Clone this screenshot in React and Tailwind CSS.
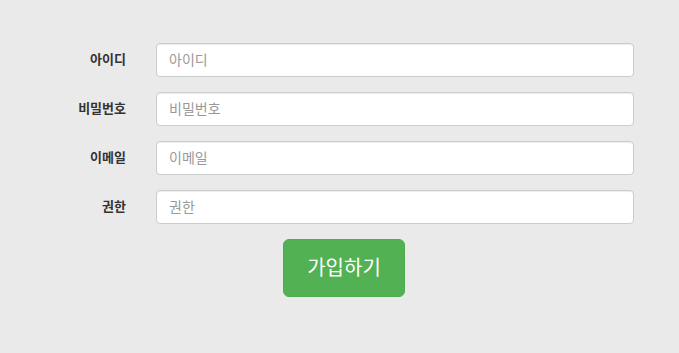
const fields = [
  { label: "아이디", name: "id" },
  { label: "비밀번호", name: "password" },
  { label: "이메일", name: "email" },
  { label: "권한", name: "role" },
];

export default function App() {
  return (
    <div
      className="min-h-[353px] w-full bg-[#eaeaea] pt-[43px]"
      style={{ fontFamily: '"Noto Sans CJK KR", "Noto Sans", sans-serif' }}
    >
      <form className="flex flex-col gap-[15px]">
        {fields.map((f) => (
          <div key={f.name} className="flex items-center">
            <label className="w-[126px] pb-[3px] text-right text-[13px] font-bold text-[#333]">
              {f.label}
            </label>
            <input
              name={f.name}
              placeholder={f.label}
              className="ml-[30px] h-[34px] w-[478px] rounded-[4px] border border-[#ccc] bg-white px-[12px] pb-[3px] text-[14px] text-[#555] placeholder-[#999] shadow-[inset_0_1px_1px_rgba(0,0,0,0.075)] outline-none"
            />
          </div>
        ))}
        <div className="flex">
          <button
            type="button"
            className="ml-[283px] h-[58px] w-[122px] rounded-[6px] border border-[#4cae4c] bg-[#52b152] pb-[2px] text-[20px] text-white"
          >
            가입하기
          </button>
        </div>
      </form>
    </div>
  );
}
